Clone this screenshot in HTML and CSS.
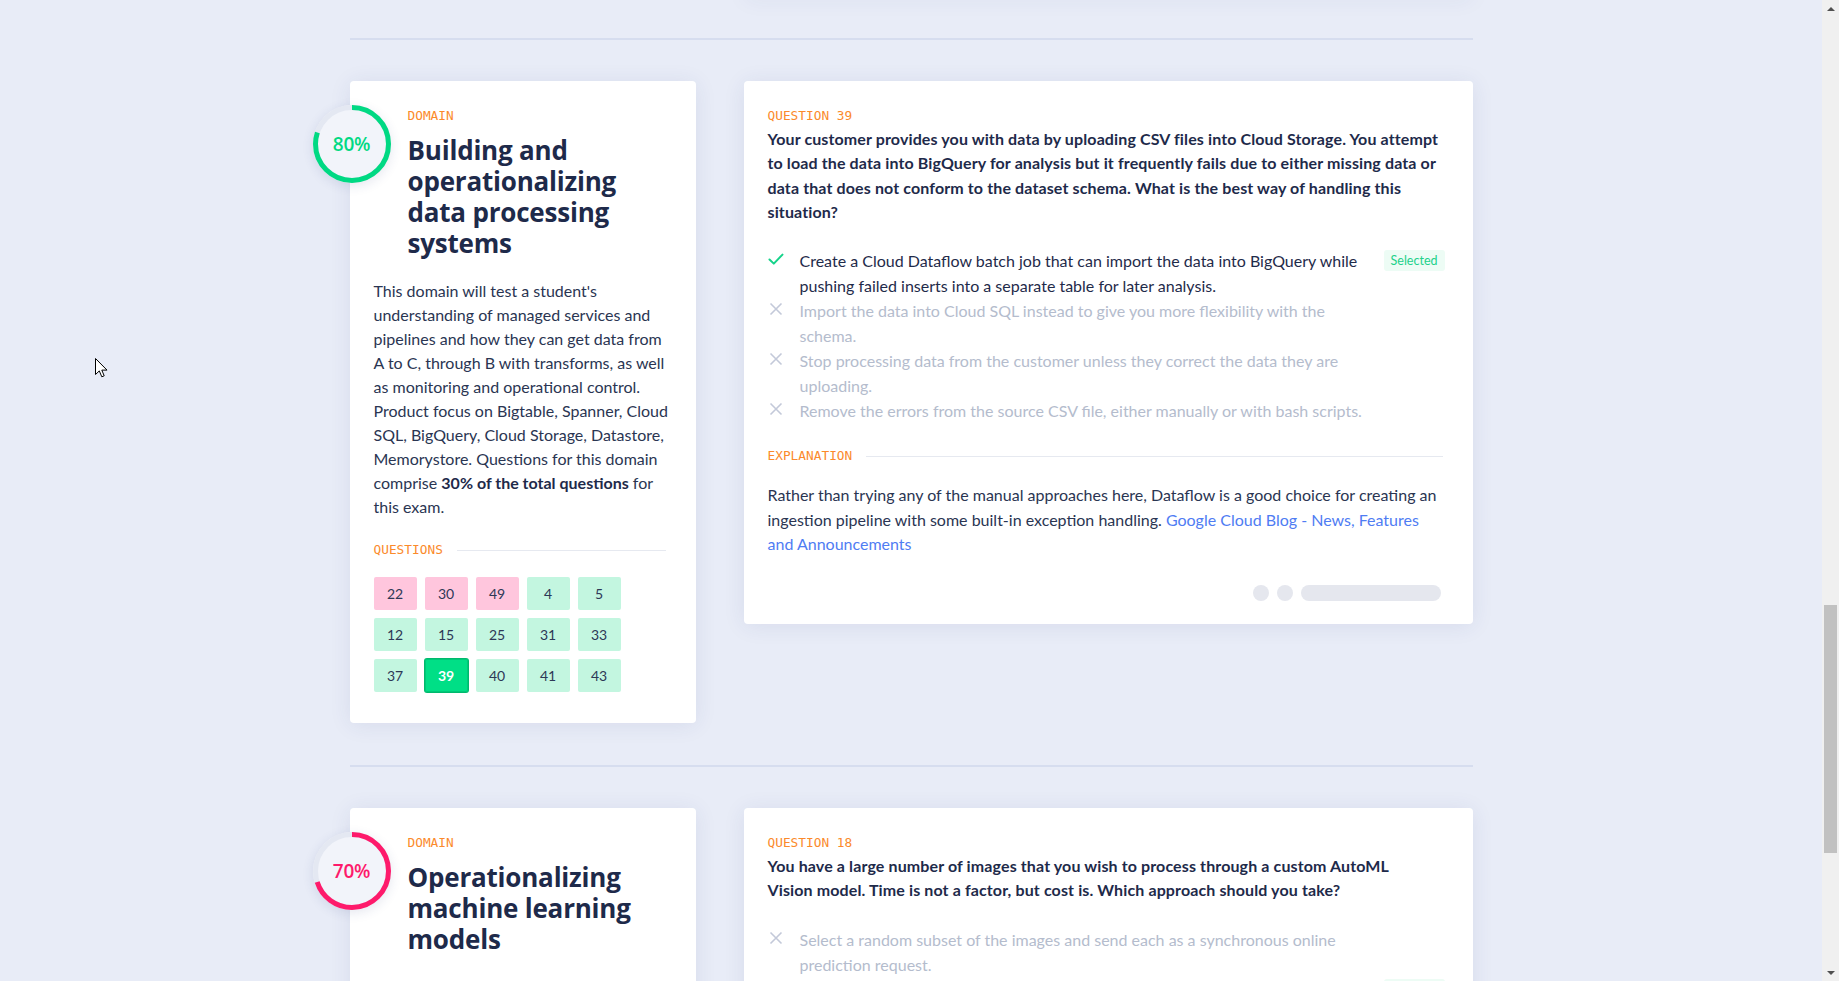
FILE: index.html
```html
<!DOCTYPE html>
<html lang="en">
<head>
<meta charset="utf-8">
<title>Exam review</title>
<link rel="stylesheet" href="styles.css">
</head>
<body>
<div class="page">
  <section class="section prev">
    <div class="stub-space"></div>
    <div class="card stub"></div>
  </section>
  <hr class="divider">

  <section class="section">
    <div class="card domain-card">
      <div class="ring">
        <svg viewBox="0 0 78 78" width="78" height="78">
          <circle cx="39" cy="39" r="36.5" class="ring-bg"/>
          <circle cx="39" cy="39" r="36.5" class="ring-val green" stroke-dasharray="183.5 229.4" transform="rotate(-90 39 39)"/>
        </svg>
        <span class="ring-text green-text">80%</span>
      </div>
      <div class="domain-head">
        <div class="label">DOMAIN</div>
        <h2 class="domain-title">Building and operationalizing data processing systems</h2>
      </div>
      <p class="domain-desc">This domain will test a student's understanding of managed services and pipelines and how they can get data from A to C, through B with transforms, as well as monitoring and operational control. Product focus on Bigtable, Spanner, Cloud SQL, BigQuery, Cloud Storage, Datastore, Memorystore. Questions for this domain comprise <strong>30% of the total questions</strong> for this exam.</p>
      <div class="label-row"><span class="label">QUESTIONS</span><span class="rule"></span></div>
      <div class="qgrid">
        <span class="qbox wrong">22</span>
        <span class="qbox wrong">30</span>
        <span class="qbox wrong">49</span>
        <span class="qbox right">4</span>
        <span class="qbox right">5</span>
        <span class="qbox right">12</span>
        <span class="qbox right">15</span>
        <span class="qbox right">25</span>
        <span class="qbox right">31</span>
        <span class="qbox right">33</span>
        <span class="qbox right">37</span>
        <span class="qbox current">39</span>
        <span class="qbox right">40</span>
        <span class="qbox right">41</span>
        <span class="qbox right">43</span>
      </div>
    </div>

    <div class="card question-card">
      <div class="label">QUESTION 39</div>
      <p class="question-text">Your customer provides you with data by uploading CSV files into Cloud Storage. You attempt to load the data into BigQuery for analysis but it frequently fails due to either missing data or data that does not conform to the dataset schema. What is the best way of handling this situation?</p>
      <ul class="options">
        <li class="option chosen">
          <svg class="opt-icon" viewBox="0 0 16 16" width="16" height="16"><path d="M1.5 8.5 L5.8 12.6 L14.5 3.6" class="check"/></svg>
          <span class="opt-text">Create a Cloud Dataflow batch job that can import the data into BigQuery while pushing failed inserts into a separate table for later analysis.</span>
          <span class="badge">Selected</span>
        </li>
        <li class="option">
          <svg class="opt-icon" viewBox="0 0 16 16" width="16" height="16"><path d="M2.5 2.5 L13.5 13.5 M13.5 2.5 L2.5 13.5" class="cross"/></svg>
          <span class="opt-text">Import the data into Cloud SQL instead to give you more flexibility with the schema.</span>
        </li>
        <li class="option">
          <svg class="opt-icon" viewBox="0 0 16 16" width="16" height="16"><path d="M2.5 2.5 L13.5 13.5 M13.5 2.5 L2.5 13.5" class="cross"/></svg>
          <span class="opt-text">Stop processing data from the customer unless they correct the data they are uploading.</span>
        </li>
        <li class="option">
          <svg class="opt-icon" viewBox="0 0 16 16" width="16" height="16"><path d="M2.5 2.5 L13.5 13.5 M13.5 2.5 L2.5 13.5" class="cross"/></svg>
          <span class="opt-text">Remove the errors from the source CSV file, either manually or with bash scripts.</span>
        </li>
      </ul>
      <div class="label-row expl-row"><span class="label">EXPLANATION</span><span class="rule"></span></div>
      <p class="explanation">Rather than trying any of the manual approaches here, Dataflow is a good choice for creating an ingestion pipeline with some built-in exception handling. <a href="#" class="link">Google Cloud Blog - News, Features and Announcements</a></p>
      <div class="card-foot">
        <span class="dot"></span><span class="dot"></span><span class="pill"></span>
      </div>
    </div>
  </section>
  <hr class="divider">

  <section class="section">
    <div class="card domain-card">
      <div class="ring">
        <svg viewBox="0 0 78 78" width="78" height="78">
          <circle cx="39" cy="39" r="36.5" class="ring-bg"/>
          <circle cx="39" cy="39" r="36.5" class="ring-val pink" stroke-dasharray="160.6 229.4" transform="rotate(-90 39 39)"/>
        </svg>
        <span class="ring-text pink-text">70%</span>
      </div>
      <div class="domain-head">
        <div class="label">DOMAIN</div>
        <h2 class="domain-title">Operationalizing machine learning models</h2>
      </div>
      <p class="domain-desc">This domain will test a student's ability to deploy, monitor and retrain machine learning models in production using pre-built APIs, AutoML and custom training on Google Cloud. Questions for this domain comprise <strong>15% of the total questions</strong> for this exam.</p>
      <div class="label-row"><span class="label">QUESTIONS</span><span class="rule"></span></div>
      <div class="qgrid">
        <span class="qbox wrong">18</span>
        <span class="qbox right">7</span>
        <span class="qbox right">27</span>
      </div>
    </div>

    <div class="card question-card">
      <div class="label">QUESTION 18</div>
      <p class="question-text">You have a large number of images that you wish to process through a custom AutoML<br>Vision model. Time is not a factor, but cost is. Which approach should you take?</p>
      <ul class="options">
        <li class="option">
          <svg class="opt-icon" viewBox="0 0 16 16" width="16" height="16"><path d="M2.5 2.5 L13.5 13.5 M13.5 2.5 L2.5 13.5" class="cross"/></svg>
          <span class="opt-text">Select a random subset of the images and send each as a synchronous online prediction request.</span>
        </li>
        <li class="option chosen">
          <svg class="opt-icon" viewBox="0 0 16 16" width="16" height="16"><path d="M1.5 8.5 L5.8 12.6 L14.5 3.6" class="check"/></svg>
          <span class="opt-text">Submit the images as a batch prediction request.</span>
          <span class="badge">Selected</span>
        </li>
      </ul>
    </div>
  </section>
</div>

<div class="scrollbar" aria-hidden="true">
  <span class="sb-arrow up"></span>
  <span class="sb-space"></span>
  <span class="sb-thumb"></span>
  <span class="sb-rest"></span>
  <span class="sb-arrow down"></span>
</div>

<svg class="cursor" viewBox="0 0 13 20" width="13" height="20" aria-hidden="true">
  <path d="M0.5 0.5 L0.5 16.5 L4.3 12.9 L6.8 18.8 L9.2 17.8 L6.8 12.1 L12 12.1 Z" fill="#fff" stroke="#000" stroke-width="1" stroke-linejoin="round"/>
</svg>
</body>
</html>
```

FILE: styles.css
```css
html, body {
  margin: 0;
  padding: 0;
}
body {
  background: #e8ecf7;
  font-family: "Lato", "Noto Sans", sans-serif;
  color: #1f2b4a;
  padding-right: 17px;
}
.page {
  width: 1123px;
  margin: 0 auto;
}
.section {
  display: grid;
  grid-template-columns: 346px 729px;
  column-gap: 48px;
  align-items: start;
  padding: 41px 0 42px;
}
.section.prev {
  padding-top: 0;
  margin-top: -14px;
}
.stub {
  height: 10px;
}
.divider {
  margin: 0;
  border: 0;
  height: 2px;
  background: #d6ddef;
}
.card {
  background: #fff;
  border-radius: 4px;
  box-shadow: 0 2px 22px rgba(40, 60, 120, 0.09);
}
.domain-card {
  position: relative;
  padding: 27px 24px 31px;
}
.ring {
  position: absolute;
  left: -37px;
  top: 24px;
  width: 78px;
  height: 78px;
  border-radius: 50%;
  background: #f2f4fa;
  box-shadow: 0 3px 12px rgba(40, 60, 120, 0.12);
  display: flex;
  align-items: center;
  justify-content: center;
}
.ring svg {
  position: absolute;
  left: 0;
  top: 0;
}
.ring-bg {
  fill: none;
  stroke: #e4e8f2;
  stroke-width: 5;
}
.ring-val {
  fill: none;
  stroke-width: 5;
}
.ring-val.green { stroke: #00d983; }
.ring-val.pink { stroke: #fe1a6b; }
.ring-text {
  position: relative;
  font-family: "Open Sans", "Noto Sans", sans-serif;
  font-size: 19px;
  font-weight: 600;
  letter-spacing: -0.2px;
}
.green-text { color: #00d983; }
.pink-text { color: #fe1a6b; }
.domain-head {
  padding-left: 34px;
}
.label {
  font-family: "DejaVu Sans Mono", "Liberation Mono", monospace;
  font-size: 12.8px;
  line-height: 16px;
  color: #fb8a2b;
}
.domain-title {
  margin: 11px 0 0;
  font-family: "Open Sans", "Noto Sans", sans-serif;
  font-size: 26px;
  line-height: 31px;
  font-weight: 700;
  letter-spacing: -0.2px;
  color: #1e2a4a;
}
.domain-desc {
  margin: 20px 0 0;
  font-size: 16px;
  line-height: 24px;
  color: #2a3552;
}
.domain-desc strong {
  font-weight: 700;
  color: #1e2a4a;
}
.label-row {
  display: flex;
  align-items: center;
  gap: 14px;
  margin-top: 23px;
}
.rule {
  flex: 1;
  height: 1px;
  background: #e6e9f0;
  margin-right: 6px;
}
.qgrid {
  display: grid;
  grid-template-columns: repeat(5, 43px);
  grid-auto-rows: 33px;
  gap: 8px;
  margin-top: 19px;
}
.qbox {
  display: flex;
  align-items: center;
  justify-content: center;
  border-radius: 2px;
  font-size: 14px;
  color: #2d3856;
}
.qbox.wrong { background: #ffc6dd; }
.qbox.right { background: #c3f6e0; }
.qbox.current {
  background: #00df86;
  color: #fff;
  font-weight: 700;
  box-shadow: 0 0 0 1px #00b96d, inset 0 0 0 1px #00c878;
}
.question-card {
  padding: 27px 24px 23px;
}
.question-text {
  margin: 3px 0 0;
  font-size: 16px;
  line-height: 24.3px;
  font-weight: 700;
  letter-spacing: 0.12px;
  color: #1e2a4a;
}
.options {
  list-style: none;
  margin: 24px 0 0;
  padding: 0;
}
.option {
  display: flex;
  align-items: flex-start;
  font-size: 16px;
  line-height: 25px;
  color: #b4bccd;
}
.option.chosen {
  color: #1f2b4a;
}
.opt-icon {
  flex: none;
  width: 16px;
  height: 16px;
  margin: 3px 16px 0 0;
}
.check {
  fill: none;
  stroke: #15d38a;
  stroke-width: 2;
  stroke-linecap: round;
  stroke-linejoin: round;
}
.cross {
  fill: none;
  stroke: #c3c9d9;
  stroke-width: 1.6;
}
.opt-text {
  flex: none;
  width: 566px;
}
.badge {
  margin-left: auto;
  margin-right: 4px;
  margin-top: 2px;
  padding: 0 7px;
  line-height: 21px;
  font-size: 12.5px;
  color: #21d18b;
  background: #edfcf5;
  border-radius: 3px;
}
.expl-row {
  margin-top: 25px;
}
.explanation {
  margin: 19px 0 0;
  font-size: 16px;
  line-height: 24.5px;
  color: #2a3552;
}
.link {
  color: #4f7cf3;
  text-decoration: none;
}
.card-foot {
  display: flex;
  justify-content: flex-end;
  gap: 8px;
  margin-top: 28px;
  padding-right: 8px;
}
.dot {
  width: 16px;
  height: 16px;
  border-radius: 50%;
  background: #e5e7ee;
}
.pill {
  width: 140px;
  height: 16px;
  border-radius: 8px;
  background: #e5e7ee;
}

/* window scrollbar as captured */
.scrollbar {
  position: fixed;
  top: 0;
  right: 0;
  bottom: 0;
  width: 17px;
  background: #f0f0f0;
  display: flex;
  flex-direction: column;
  align-items: center;
}
.sb-arrow {
  flex: none;
  height: 17px;
  width: 17px;
  display: flex;
  align-items: center;
  justify-content: center;
}
.sb-arrow::before {
  content: "";
  width: 0;
  height: 0;
  border-left: 4px solid transparent;
  border-right: 4px solid transparent;
}
.sb-arrow.up::before {
  border-bottom: 4px solid #505050;
}
.sb-arrow.down::before {
  border-top: 4px solid #505050;
}
.sb-space {
  flex: none;
  height: 588px;
}
.sb-thumb {
  flex: none;
  width: 13px;
  height: 248px;
  background: #c1c1c1;
}
.sb-rest {
  flex: 1;
}
.cursor {
  position: fixed;
  left: 95px;
  top: 358px;
}
```
